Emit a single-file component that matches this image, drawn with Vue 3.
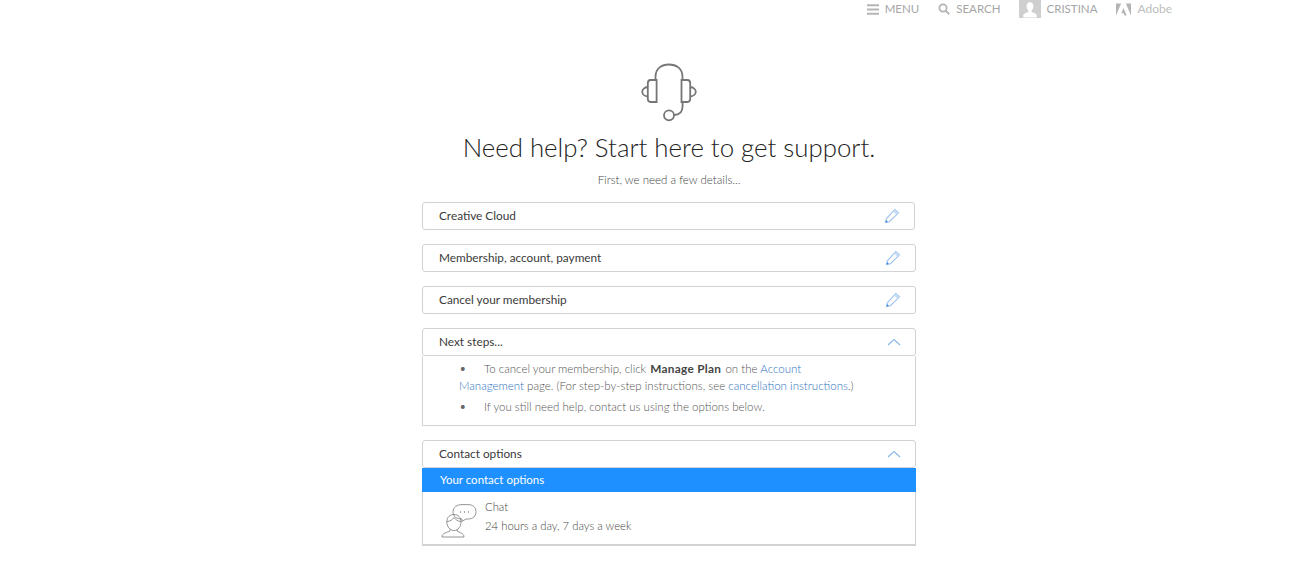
<template>
  <div class="page">
    <header class="topbar">
      <div class="nav-item">
        <svg width="12" height="11" viewBox="0 0 12 11"><path d="M0 1.200h12M0 5.500h12M0 9.800h12" stroke="#b5b5b5" stroke-width="2" fill="none" /></svg>
        <span>MENU</span>
      </div>
      <div class="nav-item">
        <svg width="12" height="12" viewBox="0 0 12 12"><circle cx="5" cy="5" r="3.600" stroke="#b5b5b5" stroke-width="1.800" fill="none" /><path d="M7.600 7.600L11.200 11.200" stroke="#b5b5b5" stroke-width="2" /></svg>
        <span>SEARCH</span>
      </div>
      <div class="nav-item user">
        <div class="avatar">
          <svg width="22" height="18" viewBox="0 0 23 18"><path d="M11.500 2c2.400 0 3.600 1.800 3.600 4.200 0 2-1 3.600-1.800 4.400v1.600c2 .8 4.600 1.400 5.200 3.200V18H4.500v-2.600c.6-1.800 3.200-2.400 5.200-3.200v-1.600C8.900 9.800 7.900 8.200 7.900 6.200 7.900 3.800 9.100 2 11.500 2z" fill="#fff" /></svg>
        </div>
        <span>CRISTINA</span>
      </div>
      <div class="nav-item adobe">
        <svg width="15" height="13" viewBox="0 0 16 13"><path d="M0 0h5.500L0 13zM10.500 0H16v13zM8 4.800L11.400 13H9.100L8.100 10.400H5.600z" fill="#b5b5b5" /></svg>
        <span>Adobe</span>
      </div>
    </header>

    <main class="content">
      <svg class="headset" width="60" height="60" viewBox="0 0 60 60" fill="none" stroke="#767676" stroke-width="1.800">
        <path d="M16.500 18V15C16.500 6 23 2.500 30 2.500C37 2.500 43.500 6 43.500 15V18" />
        <path d="M17.600 18V40H11.500C9.800 40 8.800 38.500 8.800 36.500V21.500C8.800 19.500 9.800 18 11.500 18Z" />
        <path d="M42.500 18V40H48.500C50.200 40 51.200 38.500 51.200 36.500V21.500C51.200 19.500 50.200 18 48.500 18Z" />
        <path d="M8.800 25A6.500 4.800 0 0 0 8.800 34.500M51.200 25A6.500 4.800 0 0 1 51.200 34.500" />
        <path d="M43.600 40.500V44C43.600 50 41 53 35 53" />
        <circle cx="30" cy="53.300" r="5" />
      </svg>

      <h1 class="title">Need help? Start here to get support.</h1>
      <p class="sub">First, we need a few details...</p>

      <div class="rows">
        <div v-for="row in editRows" :key="row.label" class="row" :class="{ narrow: row.narrow }">
          <span>{{ row.label }}</span>
          <svg width="16" height="16" viewBox="0 0 16 16" fill="none">
            <path d="M1.500 14.500L2.300 10.800L10.800 1.500L14.500 4.800L5.400 13.700Z" stroke="#9cc2ee" stroke-width="1.100" />
            <path d="M10.800 1.500L14.500 4.800L12.600 6.800L8.900 3.500Z" fill="#c5dcf6" />
            <path d="M1.500 14.500L2 12L4 14Z" fill="#3f86de" />
          </svg>
        </div>

        <div class="group">
          <div class="row head">
            <span>Next steps...</span>
            <svg width="14" height="8" viewBox="0 0 14 8"><path d="M1 7L7 1.500L13 7" stroke="#8db8ea" stroke-width="1.200" fill="none" /></svg>
          </div>
          <div class="panel">
            <ul>
              <li><span class="dot">•</span><span>To cancel your membership, click <b>Manage Plan</b> on the <a>Account Management</a> page. (For step-by-step instructions, see <a>cancellation instructions</a>.)</span></li>
              <li><span class="dot">•</span><span>If you still need help, contact us using the options below.</span></li>
            </ul>
          </div>
        </div>

        <div class="group">
          <div class="row head">
            <span>Contact options</span>
            <svg width="14" height="8" viewBox="0 0 14 8"><path d="M1 7L7 1.500L13 7" stroke="#8db8ea" stroke-width="1.200" fill="none" /></svg>
          </div>
          <div class="options">
            <div class="options-title">Your contact options</div>
            <div class="option">
              <svg class="chat" width="36" height="36" viewBox="0 0 36 36" fill="none" stroke="#7a7a7a" stroke-width="0.800">
                <path d="M12 8C12 3 16 .6 21 .6H27C32 .6 35 3.500 35 7.800C35 12.200 32 15 27 15H25L20.800 17.500L21 15C15.500 15 12 12.500 12 8Z" />
                <circle cx="19.500" cy="8" r="0.700" fill="#7a7a7a" stroke="none" />
                <circle cx="23.500" cy="8" r="0.700" fill="#7a7a7a" stroke="none" />
                <circle cx="27.500" cy="8" r="0.700" fill="#7a7a7a" stroke="none" />
                <path d="M5.800 18C5.800 13 9 10.500 13 10.500C17 10.500 20 13 20 18C20 22.500 17 26.500 13 26.500C9 26.500 5.800 22.500 5.800 18Z" />
                <path d="M6 17.500C9 17.500 11.500 15.500 13 13.500C14.500 15.500 17 17.500 20 17.500" />
                <path d="M9 25.500V27C6 28.500 1 29 1 33H23C23 29 18 28.500 16 27V25.500" />
              </svg>
              <div class="option-text">
                <div>Chat</div>
                <div>24 hours a day, 7 days a week</div>
              </div>
            </div>
          </div>
        </div>
      </div>
    </main>
  </div>
</template>

<script setup>
const editRows = [
  { label: "Creative Cloud", narrow: true },
  { label: "Membership, account, payment" },
  { label: "Cancel your membership" },
];
</script>

<style scoped>
.page {
  height: 565px;
  overflow: hidden;
  background: #fff;
  font-family: "Lato", "Open Sans", sans-serif;
  color: #4b4b4b;
}
.topbar {
  display: flex;
  justify-content: flex-end;
  align-items: center;
  height: 18px;
  padding-right: 125px;
  gap: 19px;
  font-size: 11.500px;
  color: #a6a6a6;
}
.nav-item {
  display: flex;
  align-items: center;
  gap: 6px;
}
.nav-item span {
  padding-bottom: 2px;
}
.user {
  margin-left: -1px;
}
.avatar {
  width: 22px;
  height: 18px;
  background: #cfcfcf;
  overflow: hidden;
}
.adobe {
  color: #bdbdbd;
  font-size: 12px;
}
.content {
  display: flex;
  flex-direction: column;
  align-items: center;
  padding-left: 41px;
}
.headset {
  display: block;
  margin-top: 44px;
}
.title {
  margin: 7px 0 0;
  font-size: 25.800px;
  line-height: 36px;
  font-weight: 300;
  color: #222;
}
.sub {
  margin: 7px 0 0;
  font-size: 11.500px;
  line-height: 16px;
  font-weight: 300;
  color: #444;
}
.rows {
  width: 494px;
  margin-top: 14px;
  display: flex;
  flex-direction: column;
  gap: 14px;
}
.row {
  display: flex;
  justify-content: space-between;
  align-items: center;
  height: 28px;
  box-sizing: border-box;
  padding: 0 14px 0 16px;
  border: 1px solid #d2d2d2;
  border-radius: 3px;
  font-size: 11.800px;
  color: #3a3a3a;
}
.row span {
  padding-bottom: 2px;
}
.row.narrow {
  width: 493px;
}
.group {
  display: flex;
  flex-direction: column;
}
.panel {
  height: 70px;
  box-sizing: border-box;
  border: 1px solid #d2d2d2;
  border-top: 0;
  font-size: 11.500px;
  line-height: 17px;
  font-weight: 300;
  color: #555;
}
.panel ul {
  margin: 0;
  padding: 4px 50px 0 36px;
  list-style: none;
}
.panel li {
  margin-bottom: 4px;
}
.dot {
  display: inline-block;
  width: 25px;
  font-size: 13px;
  color: #666;
}
.panel b {
  font-size: 11.800px;
  font-weight: 700;
  letter-spacing: 0.3px;
  margin: 0 1px;
  color: #444;
}
.panel a {
  color: #2f74c0;
}
.options {
  border: 1px solid #d2d2d2;
  border-top: 0;
  border-bottom-width: 2px;
}
.options-title {
  margin: 0 -1px;
  height: 24px;
  line-height: 24px;
  padding-left: 18px;
  background: #1e90ff;
  color: #fff;
  font-size: 11.500px;
}
.option {
  display: flex;
  gap: 8px;
  height: 52px;
  box-sizing: border-box;
  padding: 5px 0 0 18px;
}
.chat {
  margin-top: 7px;
}
.option-text {
  font-size: 11.300px;
  line-height: 19px;
  font-weight: 300;
  color: #444;
}
</style>

<style>
html,
body {
  margin: 0;
  background: #fff;
}
</style>
